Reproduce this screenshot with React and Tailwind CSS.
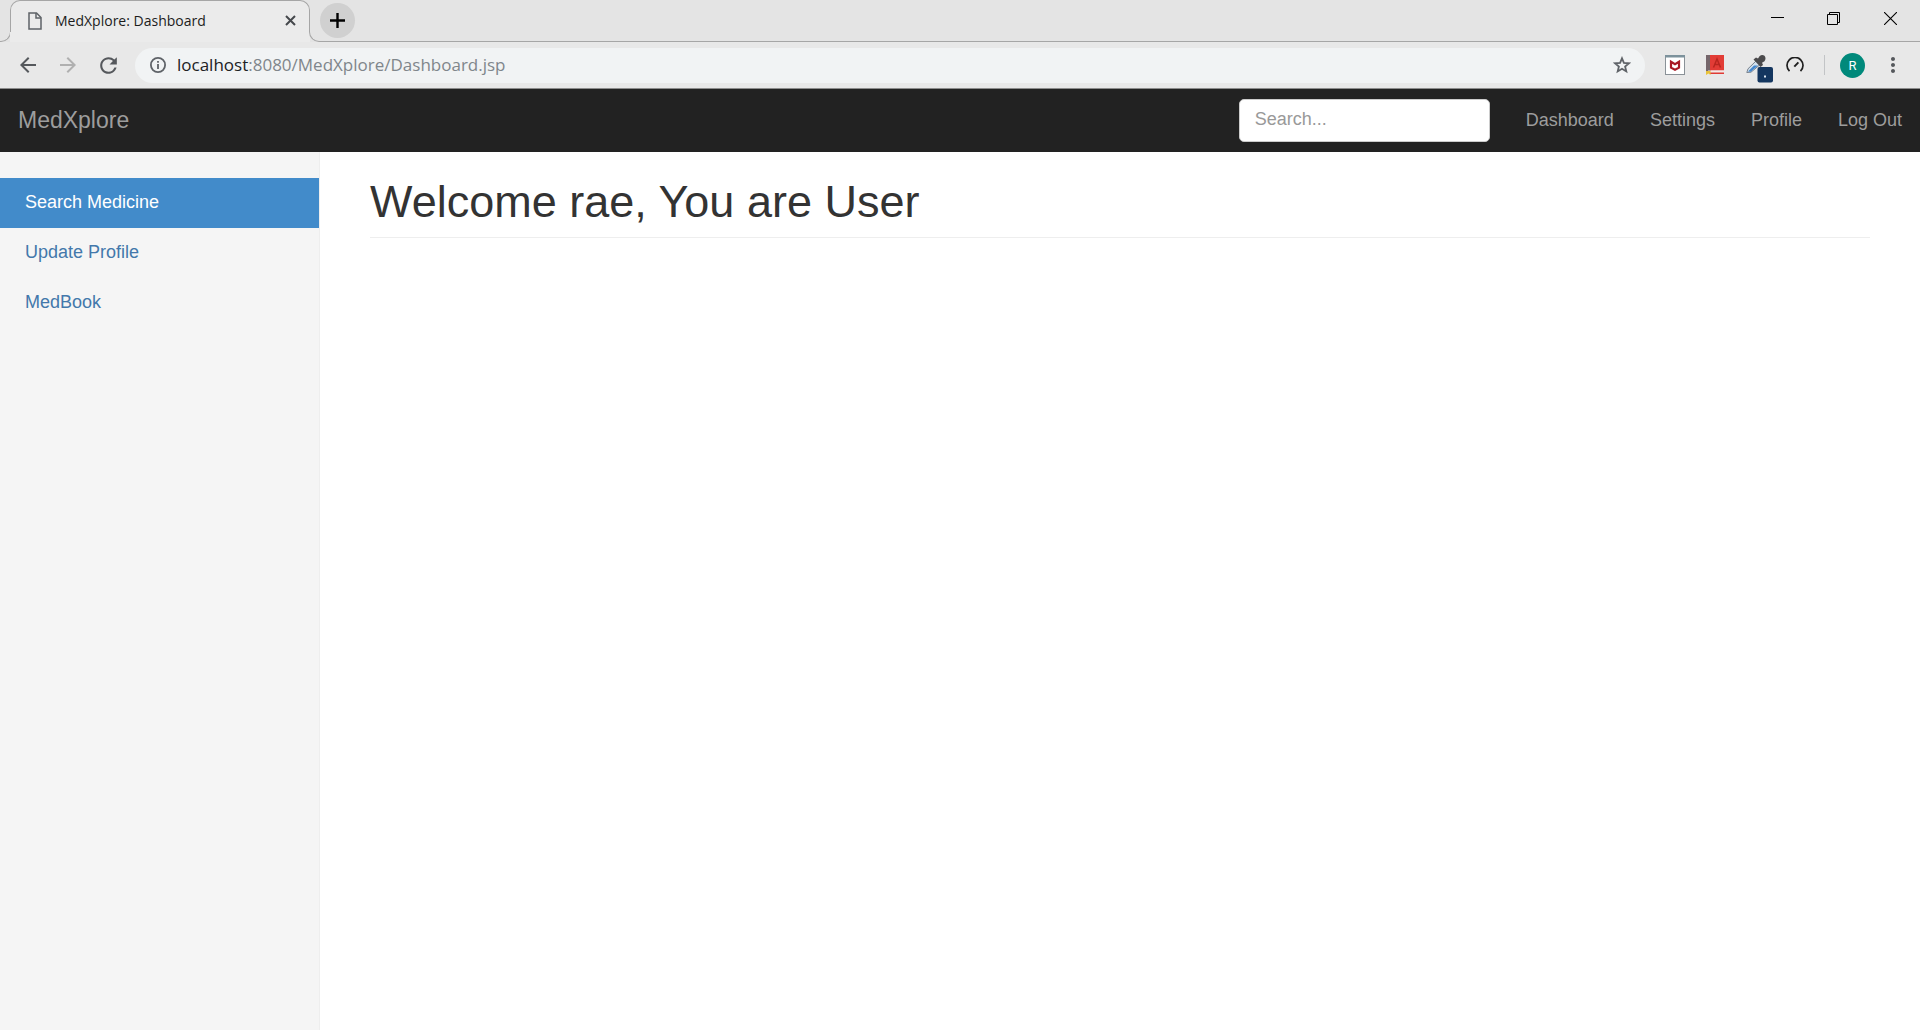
import React from "react";
import { MdArrowBack, MdArrowForward, MdRefresh, MdMoreVert } from "react-icons/md";

function TabStrip() {
  return (
    <div className="flex h-[42px] bg-[#e4e4e4]">
      <div className="-mr-px h-3 w-[11px] shrink-0 self-end rounded-br-[10px] border-r border-b border-[#a6a6a6]" />
      <div className="flex w-[300px] shrink-0 flex-col rounded-t-[10px] bg-[#ebebeb]">
        <div className="flex h-8 shrink-0 items-center rounded-t-[10px] border border-b-0 border-[#a6a6a6] pt-2 pr-[11px] pl-[17px]">
          <svg className="h-[18px] w-[14px] shrink-0" viewBox="0 0 14 18" fill="none" stroke="#5f6368" strokeWidth="1.5">
            <path d="M1 1H8.5L13 5.5V17H1Z" />
            <path d="M8 1V6H13" />
          </svg>
          <span className="ml-[13px] grow font-['Open_Sans',sans-serif] text-[14px] leading-5 whitespace-nowrap text-[#1c1c1c]">MedXplore: Dashboard</span>
          <button aria-label="Close tab" className="flex size-4 items-center justify-center">
            <svg className="size-[11px]" viewBox="0 0 11 11" stroke="#45484c" strokeWidth="2">
              <path d="M1 1L10 10M10 1L1 10" />
            </svg>
          </button>
        </div>
      </div>
      <div className="-ml-px h-3 w-[11px] shrink-0 self-end rounded-bl-[10px] border-b border-l border-[#a6a6a6]" />
      <div className="flex grow items-start justify-between border-b border-[#a6a6a6]">
        <button aria-label="New tab" className="mt-[3px] flex size-[35px] items-center justify-center rounded-full bg-[#d0d0d0]">
          <svg className="size-[15px]" viewBox="0 0 15 15" stroke="#000" strokeWidth="2.4">
            <path d="M0 7.5H15M7.5 0V15" />
          </svg>
        </button>
        <div className="flex h-9 pr-px">
          <button aria-label="Minimize" className="flex w-14 items-center justify-center">
            <svg className="size-[13px]" viewBox="0 0 13 13" stroke="#000">
              <path d="M0 5.5H13" />
            </svg>
          </button>
          <button aria-label="Restore" className="flex w-14 items-center justify-center">
            <svg className="size-[13px]" viewBox="0 0 13 13" fill="none" stroke="#000">
              <path d="M.5 2.5H10.5V12.5H.5ZM2.5 2.5V.5H12.5V10.5H10.5" />
            </svg>
          </button>
          <button aria-label="Close" className="flex w-[58px] items-center justify-center">
            <svg className="size-[13px]" viewBox="0 0 13 13" stroke="#000" strokeWidth="1.1">
              <path d="M0 0L13 13M13 0L0 13" />
            </svg>
          </button>
        </div>
      </div>
    </div>
  );
}

function InfoIcon() {
  return (
    <svg className="size-4 shrink-0" viewBox="0 0 16 16" fill="none" stroke="#5f6368" strokeWidth="1.8">
      <circle cx="8" cy="8" r="7.1" />
      <path d="M8 7V12M8 4V5.8" />
    </svg>
  );
}

function StarIcon() {
  return (
    <svg className="size-[18px]" viewBox="0 0 18 18" fill="none" stroke="#5f6368" strokeWidth="1.8">
      <path d="M9 2.3L10.9 6.9L15.9 7.3L12.1 10.5L13.3 15.4L9 12.8L4.7 15.4L5.9 10.5L2.1 7.3L7.1 6.9Z" />
    </svg>
  );
}

function ShieldIcon() {
  return (
    <svg className="size-5" viewBox="0 0 20 20">
      <rect x=".5" y=".5" width="19" height="19" fill="#fff" stroke="#8a9197" />
      <path d="M0 0H20V2.5H0Z" fill="#7d929c" />
      <path d="M6 6.8L10 9.2L14 6.8V12.6L10 14.8L6 12.6Z" fill="none" stroke="#a81824" strokeWidth="2.2" />
    </svg>
  );
}

function BookIcon() {
  return (
    <svg className="h-5 w-[18px]" viewBox="0 0 18 20">
      <path d="M0 0H5V16H0Z" fill="#75666b" />
      <path d="M4 0H18V15.5H4Z" fill="#e23c36" />
      <path d="M2 15.5H18V17.5H2Z" fill="#f3e9e6" />
      <path d="M3 17.5H18V19H3Z" fill="#e03a34" />
      <path d="M0 16H4.5V20L2.5 18.5L0 20Z" fill="#e8c23a" />
      <path d="M7.5 12.5L11 4L14.5 12.5M8.8 9.6H13.2" fill="none" stroke="#b8261f" strokeWidth="1.5" />
    </svg>
  );
}

function DropperIcon() {
  return (
    <svg className="h-7 w-[27px]" viewBox="0 0 27 28">
      <path d="M.8 17.5L2 13.8L10 6L13.8 9.8L5 17.2Z" fill="#d3e0ec" stroke="#77828d" />
      <path d="M2 16.5L8 10.5H12L4.8 16.8Z" fill="#4387cf" />
      <path d="M7.5 4.5L10 2.5L12 3.6L13.5 1.2Q16-.8 18.5 .8Q20.5 3.5 18.5 6.2L16 7.8L17 10L14.5 12Z" fill="#4b4a4c" />
      <rect x="11.5" y="12" width="15.5" height="15.5" rx="2" fill="#14365f" />
      <rect x="18" y="20.5" width="2" height="2" fill="#dfe8f2" />
    </svg>
  );
}

function GaugeIcon() {
  return (
    <svg className="h-4 w-[18px]" viewBox="0 0 18 16" fill="none" stroke="#1f1f1f" strokeWidth="1.7">
      <path d="M3.5 14.2A8 8 0 1 1 14.5 14.2" />
      <path d="M8.3 9.6L12.4 5.4" strokeWidth="2" />
    </svg>
  );
}

function Toolbar() {
  return (
    <div className="flex h-[47px] items-center border-b border-[#8c8c8c] bg-[#e8e8e8] pl-4">
      <button aria-label="Back" className="text-[#55585c]"><MdArrowBack className="size-6" /></button>
      <button aria-label="Forward" className="ml-4 text-[#b0b0b0]"><MdArrowForward className="size-6" /></button>
      <button aria-label="Reload" className="ml-4 text-[#55585c]"><MdRefresh className="size-[25px]" /></button>
      <div className="ml-[14px] flex h-[35px] grow items-center rounded-full bg-[#f1f3f4] pr-[14px] pl-[15px]">
        <InfoIcon />
        <div role="textbox" aria-label="Address" className="ml-[11px] grow font-['Open_Sans',sans-serif] text-[17px] leading-6 text-[#80868b]">
          <span className="text-[#202124]">localhost</span>:8080/MedXplore/Dashboard.jsp
        </div>
        <button aria-label="Bookmark"><StarIcon /></button>
      </div>
      <div className="flex items-center pr-[15px] pl-5">
        <button aria-label="Web protection"><ShieldIcon /></button>
        <button aria-label="Dictionary" className="ml-[21px]"><BookIcon /></button>
        <button aria-label="Color picker" className="mt-2 ml-[22px]"><DropperIcon /></button>
        <button aria-label="Page speed" className="ml-[13px]"><GaugeIcon /></button>
        <span className="ml-5 h-5 w-px bg-[#c2c4c6]" />
        <button aria-label="Account" className="ml-[15px] flex size-[25px] items-center justify-center rounded-full bg-[#00897b] font-['Roboto',sans-serif] text-[13px] leading-none text-white">R</button>
        <button aria-label="Menu" className="ml-4 text-[#55585c]"><MdMoreVert className="size-6" /></button>
      </div>
    </div>
  );
}

function Navbar() {
  return (
    <nav className="flex h-[63px] items-center justify-between bg-[#222] text-[#9d9d9d]">
      <a href="#" className="px-[18px] pb-0.5 text-[23px] leading-6">MedXplore</a>
      <div className="flex items-center">
        <input type="text" aria-label="Search" placeholder="Search..." className="mr-[18px] h-[43px] w-[251px] rounded-[5px] border border-[#ccc] bg-white px-[15px] pb-0.5 text-[18px] text-[#555] placeholder:text-[#999]" />
        <ul className="flex pb-0.5 text-[18px] leading-6">
          {["Dashboard", "Settings", "Profile", "Log Out"].map((label) => (
            <li key={label}><a href="#" className="block px-[18px]">{label}</a></li>
          ))}
        </ul>
      </div>
    </nav>
  );
}

export default function App() {
  return (
    <div className="flex min-h-screen flex-col bg-white font-['Liberation_Sans',Arial,sans-serif]">
      <header>
        <TabStrip />
        <Toolbar />
        <Navbar />
      </header>
      <div className="flex grow">
        <aside className="w-1/6 border-r border-[#eee] bg-[#f5f5f5] pt-[26px]">
          <ul className="text-[18px] leading-6">
            <li><a href="#" className="block bg-[#428bca] px-[25px] pt-3 pb-[14px] text-white">Search Medicine</a></li>
            <li><a href="#" className="block px-[25px] pt-3 pb-[14px] text-[#4378ab]">Update Profile</a></li>
            <li><a href="#" className="block px-[25px] pt-3 pb-[14px] text-[#4378ab]">MedBook</a></li>
          </ul>
        </aside>
        <main className="grow px-[50px] pt-[25px]">
          <h1 className="border-b border-[#eee] pb-[11px] text-[45px] leading-[49px] text-[#333]">Welcome rae, You are User</h1>
        </main>
      </div>
    </div>
  );
}
